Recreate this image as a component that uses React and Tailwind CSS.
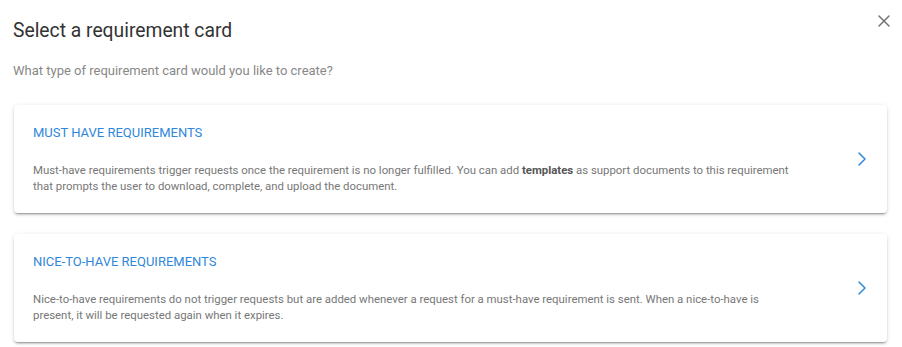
import { ChevronRight, X } from 'lucide-react';

const cards = [
  {
    title: 'Must have requirements',
    body: (
      <>
        Must-have requirements trigger requests once the requirement is no longer fulfilled. You can add{' '}
        <span className="font-bold text-[#555]">templates</span> as support documents to this requirement that
        prompts the user to download, complete, and upload the document.
      </>
    ),
  },
  {
    title: 'Nice-to-have requirements',
    body: (
      <>
        Nice-to-have requirements do not trigger requests but are added whenever a request for a must-have
        requirement is sent. When a nice-to-have is present, it will be requested again when it expires.
      </>
    ),
  },
];

const RequirementCard = ({ card }) => (
  <button className="w-full flex items-center justify-between text-left bg-white rounded-[4px] pl-[19px] pr-[13px] pt-[18px] pb-[19px] shadow-[0_3px_1px_-2px_rgba(0,0,0,0.2),0_2px_2px_0_rgba(0,0,0,0.14),0_1px_5px_0_rgba(0,0,0,0.12)]">
    <div>
      <h3 className="text-[13px] leading-[20px] uppercase text-[#2f87d9]">{card.title}</h3>
      <p className="mt-[19px] max-w-[766px] text-[11.4px] leading-[16px] text-[#777]">{card.body}</p>
    </div>
    <ChevronRight className="w-6 h-6 text-[#2f87d9]" strokeWidth={1.5} />
  </button>
);

export default function App() {
  return (
    <div className="w-[902px] h-[347px] bg-white font-['Roboto',sans-serif]">
      <div className="flex items-start justify-between pl-[13px] pr-[8px] pt-[17px]">
        <h2 className="text-[19.3px] leading-[28px] text-[#333]">Select a requirement card</h2>
        <button className="mt-[-6px] w-5 h-5 flex items-center justify-center text-[#757575]">
          <X className="w-5 h-5" strokeWidth={1.8} />
        </button>
      </div>
      <p className="mt-[16px] pl-[13px] text-[13px] leading-[20px] text-[#888]">
        What type of requirement card would you like to create?
      </p>
      <div className="mt-[24px] ml-[14px] mr-[15px] flex flex-col gap-[21px]">
        {cards.map((card) => (
          <RequirementCard key={card.title} card={card} />
        ))}
      </div>
    </div>
  );
}
